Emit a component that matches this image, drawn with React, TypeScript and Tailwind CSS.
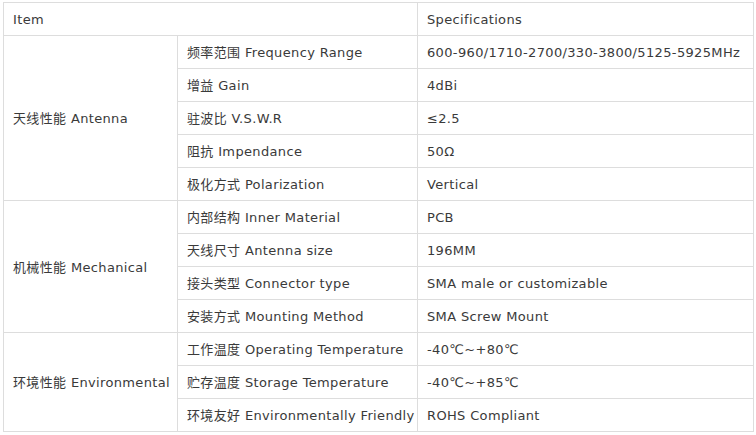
const groups = [
  {
    name: '天线性能 Antenna',
    rows: [
      ['频率范围 Frequency Range', '600-960/1710-2700/330-3800/5125-5925MHz'],
      ['增益 Gain', '4dBi'],
      ['驻波比 V.S.W.R', '≤2.5'],
      ['阻抗 Impendance', '50Ω'],
      ['极化方式 Polarization', 'Vertical'],
    ],
  },
  {
    name: '机械性能 Mechanical',
    rows: [
      ['内部结构 Inner Material', 'PCB'],
      ['天线尺寸 Antenna size', '196MM'],
      ['接头类型 Connector type', 'SMA male or customizable'],
      ['安装方式 Mounting Method', 'SMA Screw Mount'],
    ],
  },
  {
    name: '环境性能 Environmental',
    rows: [
      ['工作温度 Operating Temperature', '-40℃~+80℃'],
      ['贮存温度 Storage Temperature', '-40℃~+85℃'],
      ['环境友好 Environmentally Friendly', 'ROHS Compliant'],
    ],
  },
];

const cell = 'border border-[#dddddd] h-[33px] px-[9px] pt-[2px] pb-0 align-middle whitespace-nowrap';

export default function App() {
  return (
    <div
      className="bg-white w-[756px] h-[435px] pl-[3px] pt-[2px] text-[13px] tracking-[0.35px] text-[#3a3a3a]"
      style={{ fontFamily: '"DejaVu Sans", Verdana, "Noto Sans CJK SC", sans-serif' }}
    >
      <table className="table-fixed border-collapse w-[750px]">
        <colgroup>
          <col className="w-[174px]" />
          <col className="w-[240px]" />
          <col className="w-[336px]" />
        </colgroup>
        <tbody>
          <tr>
            <td className={cell} colSpan={2}>Item</td>
            <td className={cell}>Specifications</td>
          </tr>
          {groups.map((g) =>
            g.rows.map((r, i) => (
              <tr key={g.name + i}>
                {i === 0 && (
                  <td className={cell} rowSpan={g.rows.length}>
                    {g.name}
                  </td>
                )}
                <td className={cell}>{r[0]}</td>
                <td className={cell}>{r[1]}</td>
              </tr>
            ))
          )}
        </tbody>
      </table>
    </div>
  );
}
